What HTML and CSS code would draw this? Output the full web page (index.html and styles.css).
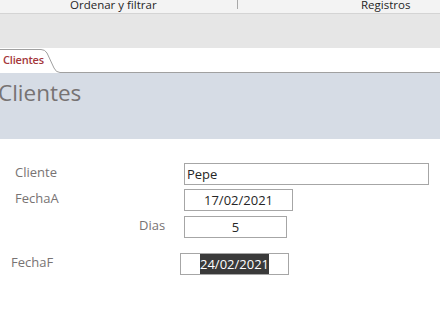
FILE: index.html
```html
<!DOCTYPE html>
<html lang="es">
<head>
    <meta charset="UTF-8">
    <title>Clientes</title>
    <link rel="stylesheet" href="styles.css">
</head>
<body>
    <div class="ribbon">
        <div class="ribbon-group first">Ordenar y filtrar</div>
        <div class="ribbon-sep"></div>
        <div class="ribbon-group second">Registros</div>
    </div>
    <div class="ribbon-space"></div>

    <div class="tabs">
        <div class="tab">
            <svg class="tab-shape" width="60" height="25" viewBox="0 0 60 25">
                <path d="M0 1.5 H41 Q45 1.5 47 5 L54 20 Q56 24.5 60 24.5" fill="none" stroke="#a0a0a0" stroke-width="1"/>
            </svg>
            <span class="tab-text">Clientes</span>
        </div>
        <div class="tab-rest"></div>
    </div>

    <div class="header">
        <h1>Clientes</h1>
    </div>

    <div class="form">
        <div class="row r-cliente">
            <span class="label">Cliente</span>
            <div class="field w-cliente">Pepe</div>
        </div>
        <div class="row r-fechaa">
            <span class="label">FechaA</span>
            <div class="field w-fechaa center">17/02/2021</div>
        </div>
        <div class="row r-dias">
            <span class="label">Dias</span>
            <div class="field w-dias center">5</div>
        </div>
        <div class="row r-fechaf">
            <span class="label">FechaF</span>
            <div class="field w-fechaf center"><span class="selected">24/02/2021</span></div>
        </div>
    </div>
</body>
</html>
```

FILE: styles.css
```css
body {
    margin: 0;
    background: #fff;
    font-family: "Open Sans", "Noto Sans", sans-serif;
    overflow: hidden;
}

.ribbon {
    display: grid;
    grid-template-columns: 237px 1px 1fr;
    height: 13px;
    background: #f3f3f3;
    border-bottom: 1px solid #d4d4d4;
    overflow: hidden;
    color: #262626;
    font-size: 11.5px;
}

.ribbon-group {
    line-height: 13px;
    margin-top: -2px;
}

.ribbon-group.first {
    padding-left: 70px;
}

.ribbon-group.second {
    padding-left: 123px;
}

.ribbon-sep {
    height: 9px;
    background: #a8a8a8;
}

.ribbon-space {
    height: 34px;
    background: #e6e6e6;
}

.tabs {
    display: flex;
    height: 25px;
    background: #fff;
}

.tab {
    position: relative;
    width: 60px;
    height: 25px;
}

.tab-shape {
    position: absolute;
    top: 0;
    left: 0;
}

.tab-text {
    position: relative;
    display: block;
    padding: 4px 0 0 3px;
    font-size: 11px;
    font-weight: 600;
    color: #a4373a;
    line-height: 15px;
    letter-spacing: -0.2px;
}

.tab-rest {
    flex: 1;
    border-bottom: 1px solid #a0a0a0;
}

.header {
    height: 66px;
    background: #d6dce5;
}

.header h1 {
    margin: 0 0 0 -2px;
    padding-top: 4px;
    font-size: 22.5px;
    font-weight: 400;
    line-height: 32px;
    color: #777373;
}

.form {
    padding-top: 24px;
    font-size: 13px;
}

.row {
    display: flex;
    height: 22px;
}

.r-fechaa {
    margin-top: 4px;
}

.r-dias {
    margin-top: 5px;
}

.r-fechaf {
    margin-top: 15px;
}

.label {
    width: 184px;
    box-sizing: border-box;
    padding-left: 15px;
    line-height: 19px;
    color: #787373;
}

.r-dias .label {
    padding-left: 139px;
}

.r-fechaf .label {
    width: 180px;
    padding-left: 11px;
}

.field {
    height: 22px;
    box-sizing: border-box;
    border: 1px solid #a6a6a6;
    padding: 0 2px;
    line-height: 20px;
    color: #262626;
    white-space: nowrap;
}

.field.center {
    text-align: center;
}

.w-cliente { width: 245px; }
.w-fechaa { width: 109px; }
.w-dias { width: 103px; }
.w-fechaf { width: 109px; }

.selected {
    display: inline-block;
    background: #3a3a3a;
    color: #fff;
}
```
